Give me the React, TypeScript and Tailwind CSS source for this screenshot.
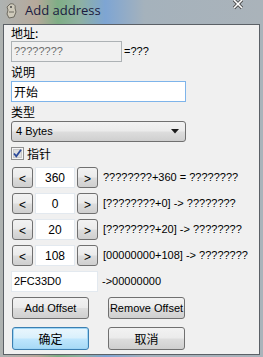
import React from "react";

const latin = "font-['Liberation_Sans','Noto_Sans_CJK_SC',sans-serif]";
const cjk = "font-['Noto_Sans_CJK_SC','Liberation_Sans',sans-serif]";

const btn =
  "flex items-center justify-center border border-[#707070] rounded-[3px] bg-[linear-gradient(#f2f2f2_0%,#ebebeb_48%,#dddddd_52%,#cfcfcf_100%)] text-black";

const Arrow = ({ dir }: { dir: "<" | ">" }) => (
  <div className={`${btn} w-[21px] h-[21px] text-[12px] leading-none text-[#333] ${latin}`}>
    <span className="mt-[2px]">{dir}</span>
  </div>
);

const OffsetRow = ({ value, text }: { value: string; text: string }) => (
  <div className="flex items-center h-[21px]">
    <div className="ml-[1px]">
      <Arrow dir="<" />
    </div>
    <div
      className={`ml-[2px] w-[40px] h-[21px] bg-white border border-[#e3e9ef] flex items-center justify-center text-[12px] ${latin}`}
    >
      {value}
    </div>
    <div className="ml-[2px]">
      <Arrow dir=">" />
    </div>
    <span className={`ml-[5px] text-[11px] text-black whitespace-nowrap ${latin}`}>{text}</span>
  </div>
);

export default function App() {
  return (
    <div className="w-[263px] h-[357px] overflow-hidden bg-[linear-gradient(90deg,#aeb3b2_0%,#b6a89a_14%,#7fae86_22%,#8eb1a0_30%,#7ea5d3_40%,#a5b2bc_55%,#aab3ba_100%)] flex flex-col">
      <div className="h-[24px] flex items-center shrink-0 relative">
        <svg width="14" height="16" viewBox="0 0 14 16" className="ml-[5px] mt-[-2px]">
          <path d="M5 1 C8 0 11 2 10 5 L11 9 L9 14 L4 15 L2 11 L3 7 L2 4 Z" fill="#cfcabb" stroke="#6d6a60" strokeWidth="1" />
          <circle cx="6" cy="4" r="1" fill="#444" />
          <path d="M4 9 L9 9" stroke="#6d6a60" />
        </svg>
        <span className={`ml-[6px] mt-[-3px] text-[13px] text-[#1b1b40] font-['Open_Sans','Liberation_Sans',sans-serif]`}>
          Add address
        </span>
        <svg width="12" height="10" viewBox="0 0 12 10" className="absolute left-[232px] top-[0px]">
          <path d="M2 0 L10 8 M10 0 L2 8" stroke="#4a4a4a" strokeWidth="3.2" />
          <path d="M2 0 L10 8 M10 0 L2 8" stroke="#ffffff" strokeWidth="1.6" />
        </svg>
      </div>

      <div className="mx-[3px] h-[331px] border border-[#5b6066] bg-[#f0f0f0] pl-[7px] flex flex-col shrink-0">
        <div className={`h-[15px] text-[12px] leading-[15px] ${cjk}`}>地址:</div>
        <div className="mt-[1px] flex items-center">
          <div
            className={`w-[111px] h-[21px] border border-[#adb2b5] bg-[#f0f0f0] text-[11px] text-[#6d6d6d] px-[2px] flex items-center ${latin}`}
          >
            ????????
          </div>
          <span className={`ml-[2px] text-[11px] ${latin}`}>=???</span>
        </div>

        <div className={`mt-[2px] h-[15px] text-[12px] leading-[15px] ${cjk}`}>说明</div>
        <div
          className={`mt-[2px] w-[175px] h-[21px] border border-[#7eb4ea] bg-white text-[12px] px-[2px] flex items-center ${cjk}`}
        >
          开始
        </div>

        <div className={`mt-[2px] h-[15px] text-[12px] leading-[15px] ${cjk}`}>类型</div>
        <div
          className={`mt-[2px] w-[175px] h-[21px] border border-[#707070] rounded-[3px] bg-[linear-gradient(#f2f2f2_0%,#ebebeb_48%,#dddddd_52%,#cfcfcf_100%)] flex items-center justify-between px-[4px] text-[11px] ${latin}`}
        >
          <span>4 Bytes</span>
          <svg width="8" height="5" viewBox="0 0 8 5" className="mr-[2px]">
            <path d="M0 0 L8 0 L4 4.5 Z" fill="#1a1a1a" />
          </svg>
        </div>

        <div className="mt-[4px] h-[15px] flex items-center">
          <svg width="13" height="13" viewBox="0 0 13 13">
            <rect x="0.5" y="0.5" width="12" height="12" fill="#f4f4f4" stroke="#8f8f8f" />
            <rect x="2.5" y="2.5" width="8" height="8" fill="#dedede" stroke="#c9c9c9" />
            <path d="M3 6.5 L5.3 9.3 L10 2.8" stroke="#2c4a9a" strokeWidth="1.8" fill="none" />
          </svg>
          <span className={`ml-[3px] text-[12px] leading-[15px] ${cjk}`}>指针</span>
        </div>

        <div className="mt-[6px] flex flex-col gap-[5px]">
          <OffsetRow value="360" text="????????+360 = ????????" />
          <OffsetRow value="0" text="[????????+0] -> ????????" />
          <OffsetRow value="20" text="[????????+20] -> ????????" />
          <OffsetRow value="108" text="[00000000+108] -> ????????" />
        </div>

        <div className="mt-[5px] flex items-center">
          <div
            className={`w-[87px] h-[21px] border border-[#e3e9ef] bg-white text-[11px] px-[2px] flex items-center ${latin}`}
          >
            2FC33D0
          </div>
          <span className={`ml-[4px] text-[11px] ${latin}`}>-&gt;00000000</span>
        </div>

        <div className="mt-[5px] flex items-center">
          <div className={`${btn} ml-[1px] w-[77px] h-[22px] text-[11px] ${latin}`}>Add Offset</div>
          <div className={`${btn} ml-[19px] w-[77px] h-[22px] text-[11px] ${latin}`}>Remove Offset</div>
        </div>

        <div className="mt-[8px] flex items-center">
          <div
            className={`ml-[1px] w-[77px] h-[23px] flex items-center justify-center rounded-[3px] border border-[#3c7fb1] shadow-[inset_0_0_0_1px_#9fd6f6] bg-[linear-gradient(#eaf6fd_0%,#d9f0fc_48%,#bee6fd_52%,#a7d9f5_100%)] text-[12px] ${cjk}`}
          >
            确定
          </div>
          <div className={`${btn} ml-[19px] w-[77px] h-[23px] text-[12px] ${cjk}`}>取消</div>
        </div>
      </div>
    </div>
  );
}
